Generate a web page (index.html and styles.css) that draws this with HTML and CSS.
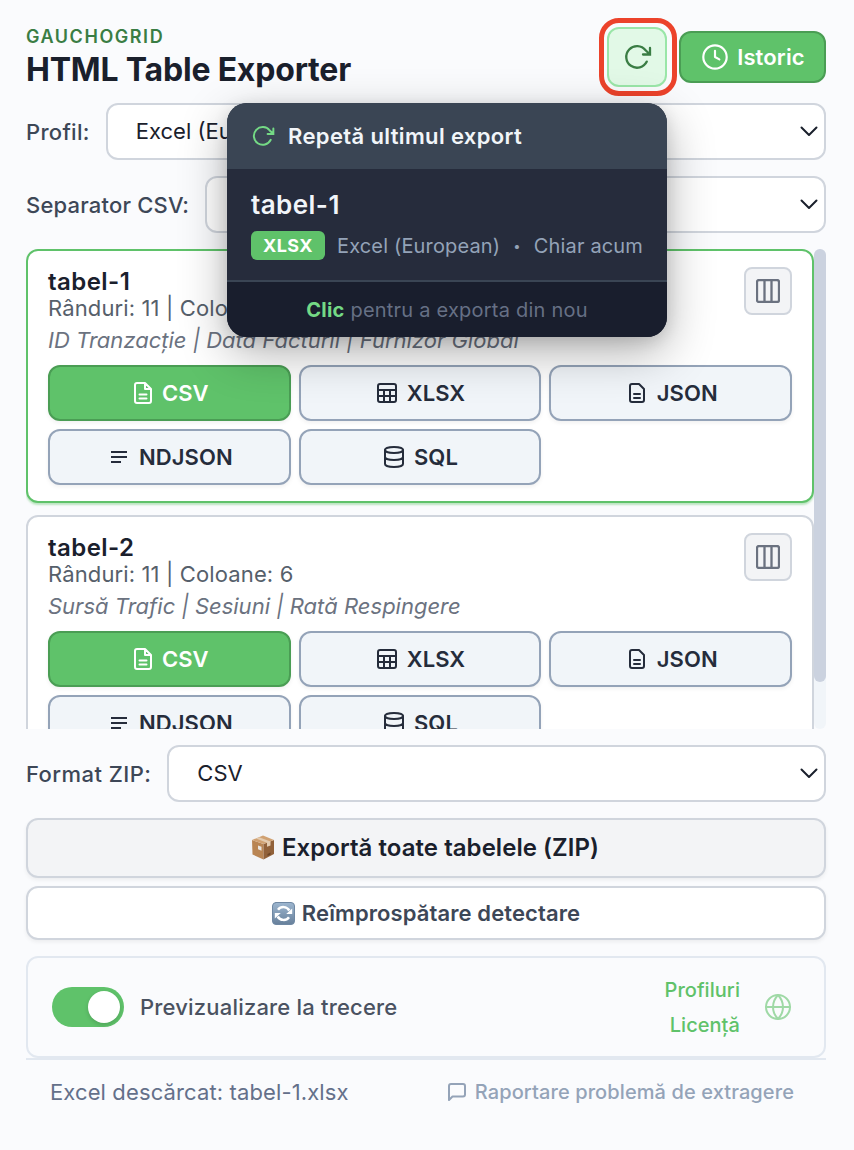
FILE: index.html
```html
<!DOCTYPE html>
<html lang="ro">
<head>
<meta charset="utf-8">
<title>HTML Table Exporter</title>
<link rel="stylesheet" href="styles.css">
</head>
<body>
<svg width="0" height="0" class="defs" aria-hidden="true">
  <symbol id="redo" viewBox="0 0 28 26"><path d="M26 4v6.500h-7M25.500 10L21.600 6.300A10.800 10.800 0 1 0 22.800 17.600"/></symbol>
  <symbol id="clock" viewBox="0 0 24 24"><circle cx="12" cy="12" r="10.800"/><path d="M12 6.300V12l4 2.200"/></symbol>
  <symbol id="chevron" viewBox="0 0 18 12"><path d="M1.500 1.500 9 9l7.500-7.500"/></symbol>
  <symbol id="columns" viewBox="0 0 24 24"><rect x="1" y="1" width="22" height="22" rx="2"/><path d="M8.500 1v22M15.500 1v22"/></symbol>
  <symbol id="csv" viewBox="0 0 18 22"><path d="M11 1H3a2 2 0 0 0-2 2v16a2 2 0 0 0 2 2h12a2 2 0 0 0 2-2V7zM11 1v6h6M5.500 12.500h7M5.500 16.500h7"/></symbol>
  <symbol id="xlsx" viewBox="0 0 20 20"><rect x="1" y="1" width="18" height="18" rx="2"/><path d="M1 7h18M1 13h18M7 7v12M13 7v12"/></symbol>
  <symbol id="json" viewBox="0 0 16 20"><path d="M10 1H3a2 2 0 0 0-2 2v14a2 2 0 0 0 2 2h10a2 2 0 0 0 2-2V6zM5 11h6M5 15h6"/></symbol>
  <symbol id="ndjson" viewBox="0 0 16 12"><path d="M0 1h16M0 6h16M0 11h10"/></symbol>
  <symbol id="sql" viewBox="0 0 20 22"><ellipse cx="10" cy="4" rx="9" ry="3"/><path d="M1 4v14c0 1.700 4 3 9 3s9-1.300 9-3V4M1 11c0 1.700 4 3 9 3s9-1.300 9-3"/></symbol>
  <symbol id="globe" viewBox="0 0 26 26"><circle cx="13" cy="13" r="12"/><path d="M1 13h24M13 1c3.300 3.500 5 7.500 5 12s-1.700 8.500-5 12c-3.300-3.500-5-7.500-5-12s1.700-8.500 5-12z"/></symbol>
  <symbol id="bubble" viewBox="0 0 18 18"><path d="M17 11.500a2 2 0 0 1-2 2H4.500L1 17V3a2 2 0 0 1 2-2h12a2 2 0 0 1 2 2z"/></symbol>
</svg>
<main class="popup">
  <header class="header">
    <div class="brand">
      <div class="brand-name">GAUCHOGRID</div>
      <h1 class="title">HTML Table Exporter</h1>
    </div>
    <div class="actions">
      <div class="redo-wrap">
        <button class="redo-btn"><svg class="i-redo"><use href="#redo"/></svg></button>
        <span class="highlight"></span>
        <section class="tooltip">
          <div class="tip-head"><svg class="i-tip"><use href="#redo"/></svg><span>Repetă ultimul export</span></div>
          <div class="tip-body">
            <div class="tip-name">tabel-1</div>
            <div class="tip-meta"><span class="badge">XLSX</span><span>Excel (European)</span><span class="dot">•</span><span>Chiar acum</span></div>
          </div>
          <div class="tip-foot"><b>Clic</b> pentru a exporta din nou</div>
        </section>
      </div>
      <button class="history"><svg class="i-clock"><use href="#clock"/></svg><span>Istoric</span></button>
    </div>
  </header>

  <div class="field profile"><span class="label">Profil:</span><div class="select"><span>Excel (European)</span><svg class="i-chev"><use href="#chevron"/></svg></div></div>
  <div class="field separator"><span class="label">Separator CSV:</span><div class="select"><span></span><svg class="i-chev"><use href="#chevron"/></svg></div></div>

  <div class="list">
    <div class="cards">
      <article class="card active">
        <div class="card-top">
          <div><h2 class="card-name">tabel-1</h2><div class="card-meta">Rânduri: 11 | Coloane: 6</div><div class="card-cols">ID Tranzacție | Data Facturii | Furnizor Global</div></div>
          <button class="cols-btn"><svg class="i-cols"><use href="#columns"/></svg></button>
        </div>
        <div class="formats">
          <button class="fmt primary"><svg class="i-csv"><use href="#csv"/></svg>CSV</button>
          <button class="fmt xlsx"><svg class="i-xlsx"><use href="#xlsx"/></svg>XLSX</button>
          <button class="fmt wide"><svg class="i-json"><use href="#json"/></svg>JSON</button>
          <button class="fmt wide"><svg class="i-nd"><use href="#ndjson"/></svg>NDJSON</button>
          <button class="fmt sql"><svg class="i-sql"><use href="#sql"/></svg>SQL</button>
        </div>
      </article>
      <article class="card">
        <div class="card-top">
          <div><h2 class="card-name">tabel-2</h2><div class="card-meta">Rânduri: 11 | Coloane: 6</div><div class="card-cols">Sursă Trafic | Sesiuni | Rată Respingere</div></div>
          <button class="cols-btn"><svg class="i-cols"><use href="#columns"/></svg></button>
        </div>
        <div class="formats">
          <button class="fmt primary"><svg class="i-csv"><use href="#csv"/></svg>CSV</button>
          <button class="fmt xlsx"><svg class="i-xlsx"><use href="#xlsx"/></svg>XLSX</button>
          <button class="fmt wide"><svg class="i-json"><use href="#json"/></svg>JSON</button>
          <button class="fmt wide"><svg class="i-nd"><use href="#ndjson"/></svg>NDJSON</button>
          <button class="fmt sql"><svg class="i-sql"><use href="#sql"/></svg>SQL</button>
        </div>
      </article>
    </div>
    <div class="track"><div class="thumb"></div></div>
  </div>

  <div class="field zip"><span class="label">Format ZIP:</span><div class="select"><span>CSV</span><svg class="i-chev"><use href="#chevron"/></svg></div></div>

  <button class="export">
    <svg class="i-box" viewBox="0 0 24 25">
      <path fill="#b98553" d="M1 5 12.500 9v15.500L1.500 19.500z"/><path fill="#916139" d="M12.500 9 23 5v14l-10.500 5.500z"/>
      <path fill="#d0a172" d="M1 5 12 .500 23 5 12.500 9z"/><path fill="#e3cbb0" d="m5 3.400 3-1.200 11.500 4.200v4l-3.500 1.400V7.700z"/>
      <path fill="#e9e6e1" d="m7 10.500 3.500 1.300v4L7 14.200z"/><path fill="#6a4526" d="m16.500 19 3-1.500v2l-3 1.500z"/>
    </svg><span>Exportă toate tabelele (ZIP)</span>
  </button>
  <button class="refresh">
    <svg class="i-sync" viewBox="0 0 23 23">
      <defs><linearGradient id="sky" x1="0" y1="0" x2="0" y2="1"><stop offset="0" stop-color="#9db6cf"/><stop offset="1" stop-color="#67809b"/></linearGradient></defs>
      <rect x=".5" y=".5" width="22" height="22" rx="3.500" fill="url(#sky)" stroke="#6f88a3"/>
      <path class="arc" d="M6 7.800A6.800 6.800 0 0 1 17.300 8.500M17 15.200A6.800 6.800 0 0 1 5.700 14.500"/>
      <path class="tips" d="M20.200 6.500v5.500h-6zM2.800 16.500V11h6z"/>
    </svg><span>Reîmprospătare detectare</span>
  </button>

  <section class="settings">
    <span class="toggle"><i class="knob"></i></span><span class="toggle-label">Previzualizare la trecere</span>
    <nav class="links"><a>Profiluri</a><a>Licență</a></nav>
    <svg class="i-globe"><use href="#globe"/></svg>
  </section>
  <footer class="footer">
    <span class="status">Excel descărcat: tabel-1.xlsx</span>
    <a class="report"><svg class="i-bubble"><use href="#bubble"/></svg><span>Raportare problemă de extragere</span></a>
  </footer>
</main>
</body>
</html>
```
FILE: styles.css
```css
* { box-sizing: border-box; }
body { margin: 0; background: #fafbfd; font-family: Inter, "Noto Sans", sans-serif; letter-spacing: .44px; color: #1a202c; white-space: nowrap; }
.defs { display: block; position: absolute; }
svg { fill: none; stroke: currentColor; stroke-width: 2; stroke-linecap: round; stroke-linejoin: round; flex: none; }
button { font: inherit; letter-spacing: inherit; color: inherit; margin: 0; padding: 0; display: flex; align-items: center; justify-content: center; }
h1, h2 { margin: 0; }
.popup { width: 854px; height: 1150px; padding: 27px 28px 0 26px; overflow: hidden; }

.header { display: flex; justify-content: space-between; height: 76px; }
.brand-name { font-size: 18px; line-height: 20px; font-weight: 600; letter-spacing: 1.55px; color: #3a7d44; }
.title { font-size: 32px; line-height: 46px; font-weight: 700; letter-spacing: -.2px; }
.actions { display: flex; gap: 12px; height: 60px; align-items: center; }
.redo-wrap { position: relative; width: 60px; height: 60px; }
.redo-btn { width: 60px; height: 60px; padding-left: 2px; border: 2px solid #9ae6a8; border-radius: 12px; background: #e2f9e7; color: #3a7d44; }
.i-redo { width: 28px; height: 26px; stroke-width: 2.300; stroke-linejoin: miter; }
.highlight { position: absolute; inset: -9.5px -9.5px -8.5px -8px; border: 5px solid #ec432b; border-radius: 20px; }
.history { width: 147px; height: 52px; gap: 9px; padding-left: 2px; border: 2px solid #4a9d54; border-radius: 12px; background: #5fc26a; color: #fff; font-size: 22px; font-weight: 600; letter-spacing: .15px; }
.i-clock { width: 26px; height: 26px; }

.tooltip { position: absolute; z-index: 5; right: 0; top: 76px; width: 440px; height: 234px; border-radius: 20px; overflow: hidden; background: #262c3c; box-shadow: 0 16px 48px rgba(0,0,0,.3), 0 4px 16px rgba(0,0,0,.12); }
.tip-head { height: 66px; display: flex; align-items: center; gap: 13px; padding-left: 25px; background: #3a4554; color: #f1f5f9; font-size: 22px; font-weight: 600; letter-spacing: .36px; }
.i-tip { width: 23px; height: 22px; color: #74d985; stroke-width: 2.400; stroke-linejoin: miter; }
.tip-body { height: 111px; padding: 20px 24px 0; color: #94a3b8; }
.tip-name { font-size: 26px; line-height: 32px; font-weight: 600; color: #f1f5f9; }
.tip-meta { margin-top: 10px; height: 30px; display: flex; align-items: center; gap: 12px; font-size: 20px; letter-spacing: .15px; }
.badge { flex: none; width: 74px; height: 29px; margin-bottom: 1px; border-radius: 6px; background: #5fc26a; color: #fff; font-size: 18px; line-height: 29px; font-weight: 700; letter-spacing: .44px; text-align: center; }
.dot { width: 10px; text-align: center; font-size: 13px; }
.tip-foot { height: 57px; line-height: 57px; border-top: 2px solid #3a4554; background: #191e2d; color: #667085; font-size: 20px; letter-spacing: .22px; text-align: center; }
.tip-foot b { color: #74d985; font-weight: 700; }

.field { display: flex; align-items: center; height: 57px; gap: 16px; margin-bottom: 16px; }
.label { font-size: 22px; font-weight: 500; color: #3d4757; }
.profile .label { letter-spacing: .3px; }
.separator { gap: 16px; }
.separator .label { letter-spacing: .19px; }
.select { flex: 1; height: 57px; border: 2px solid #d0d5dd; border-radius: 12px; background: #fff; display: flex; align-items: center; justify-content: space-between; padding: 0 6px 2px 28px; font-size: 22px; letter-spacing: 0; }
.i-chev { width: 18px; height: 12px; margin-top: 2px; }

.list { display: flex; height: 480px; overflow: hidden; margin-bottom: 16px; }
.cards { width: 788px; display: flex; flex-direction: column; gap: 12px; }
.card { flex: none; height: 254px; padding: 16px 20px; border: 2px solid #d0d5dd; border-radius: 12px; background: #fff; }
.active { border-color: #5fc26a; box-shadow: 0 2px 2px rgba(95,194,106,.4); }
.card-top { display: flex; justify-content: space-between; height: 98px; }
.card-name { padding-top: 1px; font-size: 24px; line-height: 28px; font-weight: 600; }
.card-meta { font-size: 22px; line-height: 25px; letter-spacing: .13px; color: #56606b; }
.card-cols { margin-top: 5px; font-size: 22px; line-height: 28px; font-style: italic; letter-spacing: 0; color: #6b7280; }
.cols-btn { width: 48px; height: 48px; border: 2px solid #d0d5dd; border-radius: 8px; background: #f3f4f6; color: #6b7280; }
.i-cols { width: 24px; height: 24px; stroke-width: 2.300; }
.formats { display: grid; grid-template-columns: repeat(3, 1fr); grid-auto-rows: 56px; gap: 8px; }
.fmt { gap: 10px; padding-left: 4px; border: 2px solid #94a3b8; border-radius: 12px; background: #f1f5f9; color: #252c3b; font-size: 22px; font-weight: 600; letter-spacing: .1px; box-shadow: 0 2px 4px rgba(0,0,0,.06); }
.wide { gap: 12px; padding-left: 5px; }
.xlsx { padding-left: 2px; }
.sql { padding-left: 2px; }
.primary { border-color: #4a9d54; background: #5fc26a; color: #fff; }
.i-csv { width: 18px; height: 22px; }
.i-xlsx { width: 20px; height: 20px; }
.i-json { width: 16px; height: 20px; }
.i-nd { width: 16px; height: 12px; stroke-linecap: butt; }
.i-sql { width: 20px; height: 22px; }
.track { width: 12px; border-radius: 6px; background: #f1f5f9; }
.thumb { height: 433px; border-radius: 6px; background: #cbd2df; }

.export, .refresh { width: 800px; border: 2px solid #d0d5dd; border-radius: 12px; box-shadow: 0 2px 4px rgba(0,0,0,.06); gap: 7px; }
.export { height: 60px; padding: 0 2px 2px 0; background: #f3f4f6; font-size: 24px; font-weight: 600; letter-spacing: .05px; }
.refresh { margin-top: 8px; height: 54px; background: #fff; color: #3d4757; font-size: 22px; font-weight: 600; letter-spacing: .1px; }
.i-box { width: 24px; height: 25px; stroke: none; }
.i-sync { width: 23px; height: 23px; stroke-width: 1; }
.arc { stroke: #fff; stroke-width: 2.500; stroke-linecap: butt; }
.tips { fill: #fff; stroke: none; }

.settings { margin-top: 16px; height: 102px; border: 2px solid #e2e8f0; border-radius: 12px; display: flex; align-items: center; padding: 0 33px 0 24px; }
.toggle { width: 72px; height: 40px; border-radius: 20px; background: #5fc26a; padding: 4px 4px 4px 36px; }
.knob { display: block; width: 32px; height: 32px; border-radius: 50%; background: #fff; box-shadow: 0 2px 4px rgba(0,0,0,.15); }
.toggle-label { margin-left: 16px; font-size: 22px; font-weight: 500; letter-spacing: .19px; color: #4a5261; }
.links { margin-left: auto; margin-right: 25px; padding-top: 2px; display: flex; flex-direction: column; align-items: flex-end; font-size: 20px; line-height: 35px; font-weight: 500; letter-spacing: .05px; color: #5fc26a; }
.i-globe { width: 26px; height: 26px; color: #9fd9a6; }
.footer { border-top: 2px solid #e2e8f0; height: 70px; display: flex; align-items: center; justify-content: space-between; padding: 0 32px 4px 24px; }
.status { font-size: 22px; letter-spacing: .12px; color: #64708a; }
.report { display: flex; align-items: center; gap: 9px; font-size: 20px; font-weight: 500; letter-spacing: .1px; color: #94a3b8; }
.i-bubble { width: 18px; height: 18px; }
```
